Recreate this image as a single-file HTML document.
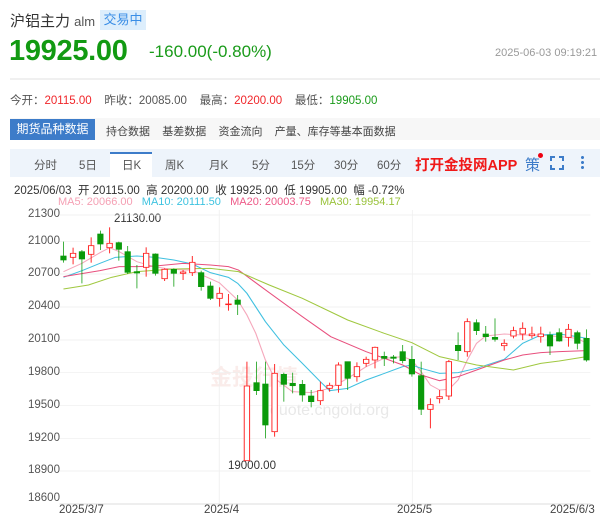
<!DOCTYPE html>
<html><head><meta charset="utf-8"><style>
*{margin:0;padding:0;box-sizing:border-box}
body{width:600px;height:517px;background:#fff;font-family:"Liberation Sans","Noto Sans CJK SC",sans-serif;position:relative;overflow:hidden;color:#333}
.a{position:absolute;white-space:nowrap}
.g{color:#1a9b1a}.r{color:#f0262a}
</style></head><body>
<div class="a" style="left:10px;top:10px;font-size:15px;color:#333">沪铝主力 <span style="font-size:13px;color:#555">alm</span></div>
<div class="a" style="left:100px;top:10px;width:46px;height:20px;background:#ddeefc;color:#3a8ee6;font-size:13px;line-height:20px;text-align:center">交易中</div>
<div class="a g" style="left:9px;top:35px;font-size:29px;font-weight:bold;color:#129a12;letter-spacing:-0.3px">19925.00</div>
<div class="a g" style="left:149px;top:42px;font-size:17px">-160.00(-0.80%)</div>
<div class="a" style="left:495px;top:47px;font-size:11px;color:#999">2025-06-03 09:19:21</div>
<div class="a" style="left:10px;top:78px;width:590px;height:2px;background:#f0f0f0"></div>
<div class="a" style="left:10px;top:92px;font-size:11.5px;color:#555">今开：<span class="r">20115.00</span>&nbsp;&nbsp;&nbsp;&nbsp;昨收：20085.00&nbsp;&nbsp;&nbsp;&nbsp;最高：<span class="r">20200.00</span>&nbsp;&nbsp;&nbsp;&nbsp;最低：<span class="g">19905.00</span></div>
<div class="a" style="left:10px;top:118px;width:590px;height:22px;background:#f7f7f7"></div>
<div class="a" style="left:10px;top:119px;width:85px;height:21px;background:#3d7cc9;color:#fff;font-size:12px;line-height:21px;text-align:center">期货品种数据</div>
<div class="a" style="left:106px;top:123px;font-size:11px;color:#444">持仓数据&nbsp;&nbsp;&nbsp;&nbsp;基差数据&nbsp;&nbsp;&nbsp;&nbsp;资金流向&nbsp;&nbsp;&nbsp;&nbsp;产量、库存等基本面数据</div>
<div class="a" style="left:10px;top:149px;width:590px;height:28px;background:#eef4fb"></div>
<div class="a" style="left:110px;top:152px;width:42px;height:25px;background:#fff;border-top:2px solid #3d7cc9"></div>
<div class="a" style="top:157px;left:0;font-size:11.5px;color:#555;width:400px">
<span class="a" style="left:34px">分时</span><span class="a" style="left:79px">5日</span><span class="a" style="left:122px">日K</span><span class="a" style="left:165px">周K</span><span class="a" style="left:209px">月K</span><span class="a" style="left:252px">5分</span><span class="a" style="left:291px">15分</span><span class="a" style="left:334px">30分</span><span class="a" style="left:377px">60分</span></div>
<div class="a r" style="left:415px;top:154px;font-size:14.5px;font-weight:bold;color:#f01818">打开金投网APP</div>
<div class="a" style="left:525px;top:154px;font-size:15px;color:#3d7cc9">策</div>
<div class="a" style="left:538px;top:153px;width:5px;height:5px;border-radius:50%;background:#e01"></div>
<svg class="a" style="left:550px;top:156px" width="14" height="14" viewBox="0 0 14 14" fill="none" stroke="#3d7cc9" stroke-width="2"><path d="M1 5V1h4M9 1h4v4M13 9v4H9M5 13H1V9"/></svg>
<div class="a" style="left:581px;top:155px;width:3px;height:14px;background:radial-gradient(circle,#3d7cc9 1.4px,transparent 1.6px) 0 0/3px 5px"></div>
<div class="a" style="left:14px;top:182px;font-size:11.5px;color:#333">2025/06/03&nbsp; 开 20115.00&nbsp; 高 20200.00&nbsp; 收 19925.00&nbsp; 低 19905.00&nbsp; 幅 -0.72%</div>
<div class="a" style="left:58px;top:196px;font-size:11px"><span style="color:#f5a0b4">MA5: 20066.00</span>&nbsp;&nbsp; <span style="color:#3ec3e0">MA10: 20111.50</span>&nbsp;&nbsp; <span style="color:#ee5a88">MA20: 20003.75</span>&nbsp;&nbsp; <span style="color:#99c23a">MA30: 19954.17</span></div>
<div class="a" style="left:0;top:207px;font-size:11.5px;color:#555;width:60px">
<span class="a" style="left:28px;top:1px">21300</span><span class="a" style="left:28px;top:28px">21000</span><span class="a" style="left:28px;top:60px">20700</span><span class="a" style="left:28px;top:93px">20400</span><span class="a" style="left:28px;top:126px">20100</span><span class="a" style="left:28px;top:159px">19800</span><span class="a" style="left:28px;top:192px">19500</span><span class="a" style="left:28px;top:225px">19200</span><span class="a" style="left:28px;top:257px">18900</span><span class="a" style="left:28px;top:285px">18600</span></div>
<div class="a" style="left:114px;top:213px;font-size:11.5px;color:#333">21130.00</div>
<div class="a" style="left:228px;top:460px;font-size:11.5px;color:#333">19000.00</div>
<div class="a" style="top:504px;left:0;font-size:11.5px;color:#444;width:600px"><span class="a" style="left:59px">2025/3/7</span><span class="a" style="left:204px">2025/4</span><span class="a" style="left:397px">2025/5</span><span class="a" style="left:550px">2025/6/3</span></div>
<div class="a" style="left:210px;top:360px;font-size:22px;color:rgba(230,150,140,0.18);font-weight:bold">金投行情</div>
<div class="a" style="left:270px;top:402px;font-size:16px;color:rgba(180,180,180,0.3)">quote.cngold.org</div>
<svg class="a" style="left:0;top:200px" width="600" height="317" viewBox="0 0 1560 951" preserveAspectRatio="none">
<g stroke="#eee" stroke-width="2">
<line x1="155" y1="45" x2="1535" y2="45"/><line x1="155" y1="125" x2="1535" y2="125"/><line x1="155" y1="222" x2="1535" y2="222"/><line x1="155" y1="321" x2="1535" y2="321"/><line x1="155" y1="420" x2="1535" y2="420"/><line x1="155" y1="518" x2="1535" y2="518"/><line x1="155" y1="617" x2="1535" y2="617"/><line x1="155" y1="716" x2="1535" y2="716"/><line x1="155" y1="813" x2="1535" y2="813"/>
<line x1="570" y1="30" x2="570" y2="912"/><line x1="1072" y1="30" x2="1072" y2="912"/>
</g>
<line x1="155" y1="912" x2="1535" y2="912" stroke="#ddd" stroke-width="3"/>
<g fill="none" stroke-width="3">
<polyline stroke="#f5a8bc" points="165,215 213,190 260,158 285,143 310,155 356,185 400,200 430,205 475,210 500,210 525,225 570,248 618,300 642,345 665,400 690,480 714,535 760,575 810,578 857,565 904,535 952,500 999,475 1047,470 1071,480 1095,515 1119,555 1143,570 1167,568 1191,540 1215,480 1239,430 1263,408 1311,402 1359,405 1406,405 1454,410 1501,415 1525,430"/>
<polyline stroke="#40c0e0" points="165,232 213,212 260,190 300,172 356,168 404,172 452,180 500,192 547,218 594,232 618,250 642,280 690,365 738,435 786,490 833,545 857,572 904,565 952,540 1000,520 1047,500 1071,495 1095,505 1143,520 1191,518 1239,505 1311,478 1359,430 1406,405 1454,402 1501,410 1525,415"/>
<polyline stroke="#e8507e" points="165,230 260,212 310,200 356,200 404,198 476,190 547,195 594,200 620,210 700,278 786,350 860,410 952,455 1047,495 1095,525 1143,542 1191,530 1239,510 1311,480 1359,465 1406,458 1454,455 1525,452"/>
<polyline stroke="#a0c840" points="165,267 230,255 290,232 356,215 450,207 547,205 620,215 700,255 786,295 904,360 999,400 1071,428 1143,470 1239,495 1335,510 1406,490 1454,483 1525,470"/>
</g>
<g stroke="#0a9a0a" fill="#0a9a0a" stroke-width="2">
<line x1="165" y1="125" x2="165" y2="188"/><rect x="158" y="168" width="14" height="12"/>
<line x1="213" y1="150" x2="213" y2="250"/><rect x="206" y="155" width="14" height="22"/>
<line x1="261" y1="92" x2="261" y2="150"/><rect x="254" y="102" width="14" height="30"/>
<line x1="309" y1="125" x2="309" y2="182"/><rect x="302" y="128" width="14" height="20"/>
<line x1="332" y1="138" x2="332" y2="222"/><rect x="325" y="155" width="14" height="62"/>
<line x1="356" y1="195" x2="356" y2="265"/><rect x="349" y="215" width="14" height="4"/>
<line x1="404" y1="160" x2="404" y2="227"/><rect x="397" y="162" width="14" height="58"/>
<line x1="452" y1="205" x2="452" y2="260"/><rect x="445" y="208" width="14" height="12"/>
<line x1="523" y1="212" x2="523" y2="272"/><rect x="516" y="218" width="14" height="42"/>
<line x1="547" y1="245" x2="547" y2="300"/><rect x="540" y="258" width="14" height="37"/>
<line x1="618" y1="285" x2="618" y2="345"/><rect x="611" y="300" width="14" height="13"/>
<line x1="667" y1="485" x2="667" y2="585"/><rect x="660" y="548" width="14" height="24"/>
<line x1="690" y1="485" x2="690" y2="715"/><rect x="683" y="552" width="14" height="123"/>
<line x1="738" y1="518" x2="738" y2="605"/><rect x="731" y="523" width="14" height="30"/>
<line x1="761" y1="518" x2="761" y2="580"/><rect x="754" y="550" width="14" height="7"/>
<line x1="786" y1="540" x2="786" y2="605"/><rect x="779" y="553" width="14" height="32"/>
<line x1="809" y1="570" x2="809" y2="622"/><rect x="802" y="588" width="14" height="17"/>
<line x1="904" y1="485" x2="904" y2="570"/><rect x="897" y="485" width="14" height="50"/>
<line x1="999" y1="455" x2="999" y2="498"/><rect x="992" y="469" width="14" height="6"/>
<line x1="1023" y1="465" x2="1023" y2="490"/><rect x="1016" y="471" width="14" height="4"/>
<line x1="1047" y1="435" x2="1047" y2="490"/><rect x="1040" y="455" width="14" height="27"/>
<line x1="1071" y1="438" x2="1071" y2="530"/><rect x="1064" y="478" width="14" height="44"/>
<line x1="1095" y1="485" x2="1095" y2="645"/><rect x="1088" y="527" width="14" height="101"/>
<line x1="1191" y1="397" x2="1191" y2="480"/><rect x="1184" y="436" width="14" height="16"/>
<line x1="1239" y1="358" x2="1239" y2="405"/><rect x="1232" y="368" width="14" height="24"/>
<line x1="1263" y1="378" x2="1263" y2="425"/><rect x="1256" y="402" width="14" height="8"/>
<line x1="1287" y1="355" x2="1287" y2="425"/><rect x="1280" y="412" width="14" height="6"/>
<line x1="1430" y1="395" x2="1430" y2="465"/><rect x="1423" y="405" width="14" height="33"/>
<line x1="1454" y1="385" x2="1454" y2="425"/><rect x="1447" y="398" width="14" height="25"/>
<line x1="1501" y1="392" x2="1501" y2="448"/><rect x="1494" y="398" width="14" height="32"/>
<line x1="1525" y1="388" x2="1525" y2="485"/><rect x="1518" y="415" width="14" height="65"/>
</g>
<g stroke="#f22" fill="#fff" stroke-width="2.5">
<line x1="190" y1="143" x2="190" y2="193"/><rect x="183" y="160" width="14" height="12"/>
<line x1="237" y1="112" x2="237" y2="188"/><rect x="230" y="137" width="14" height="26"/>
<line x1="285" y1="82" x2="285" y2="160"/><rect x="278" y="130" width="14" height="13"/>
<line x1="380" y1="142" x2="380" y2="230"/><rect x="373" y="160" width="14" height="42"/>
<line x1="428" y1="205" x2="428" y2="243"/><rect x="421" y="208" width="14" height="28"/>
<line x1="476" y1="210" x2="476" y2="240"/><rect x="469" y="216" width="14" height="4"/>
<line x1="500" y1="168" x2="500" y2="228"/><rect x="493" y="187" width="14" height="31"/>
<line x1="571" y1="262" x2="571" y2="320"/><rect x="564" y="280" width="14" height="15"/>
<line x1="594" y1="282" x2="594" y2="332"/><rect x="587" y="312" width="14" height="2"/>
<line x1="642" y1="485" x2="642" y2="782"/><rect x="635" y="558" width="14" height="224"/>
<line x1="714" y1="492" x2="714" y2="710"/><rect x="707" y="520" width="14" height="175"/>
<line x1="833" y1="545" x2="833" y2="615"/><rect x="826" y="572" width="14" height="30"/>
<line x1="857" y1="548" x2="857" y2="575"/><rect x="850" y="556" width="14" height="9"/>
<line x1="880" y1="487" x2="880" y2="578"/><rect x="873" y="495" width="14" height="61"/>
<line x1="928" y1="487" x2="928" y2="545"/><rect x="921" y="500" width="14" height="30"/>
<line x1="952" y1="470" x2="952" y2="500"/><rect x="945" y="478" width="14" height="12"/>
<line x1="975" y1="440" x2="975" y2="505"/><rect x="968" y="442" width="14" height="38"/>
<line x1="1119" y1="595" x2="1119" y2="685"/><rect x="1112" y="614" width="14" height="14"/>
<line x1="1143" y1="570" x2="1143" y2="610"/><rect x="1136" y="590" width="14" height="6"/>
<line x1="1167" y1="480" x2="1167" y2="600"/><rect x="1160" y="485" width="14" height="103"/>
<line x1="1215" y1="355" x2="1215" y2="470"/><rect x="1208" y="365" width="14" height="90"/>
<line x1="1311" y1="418" x2="1311" y2="452"/><rect x="1304" y="430" width="14" height="7"/>
<line x1="1335" y1="380" x2="1335" y2="415"/><rect x="1328" y="392" width="14" height="16"/>
<line x1="1359" y1="367" x2="1359" y2="420"/><rect x="1352" y="385" width="14" height="17"/>
<line x1="1383" y1="380" x2="1383" y2="415"/><rect x="1376" y="402" width="14" height="5"/>
<line x1="1406" y1="380" x2="1406" y2="428"/><rect x="1399" y="402" width="14" height="8"/>
<line x1="1478" y1="372" x2="1478" y2="440"/><rect x="1471" y="388" width="14" height="24"/>
</g>
</svg>
</body></html>
